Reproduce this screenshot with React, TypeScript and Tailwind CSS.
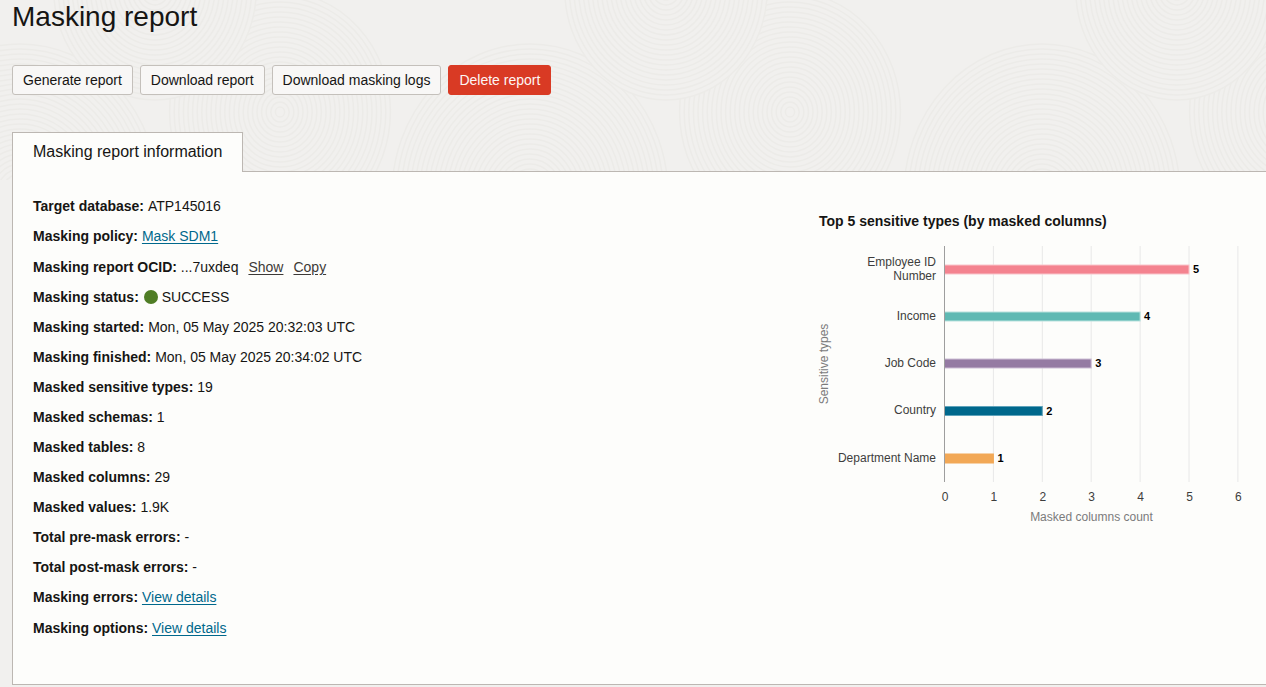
const font = { fontFamily: '"Liberation Sans", Arial, sans-serif' };

const swirls: [number, number, number][] = [
  [20, 194, 150],
  [530, 194, 150],
  [1042, 194, 150],
  [280, 112, 120],
  [790, 112, 120],
  [1300, 112, 120],
  [155, -10, 110],
  [666, -10, 110],
  [1177, -10, 110],
];

function Texture() {
  return (
    <svg className="absolute left-0 top-0 h-[180px] w-[1266px]" viewBox="0 0 1266 180" fill="none">
      {swirls.map(([cx, cy, r], i) => (
        <g key={i}>
          {Array.from({ length: Math.floor(r / 5) }, (_, k) => {
            const radius = r - k * 5;
            return (
              <ellipse
                key={k}
                cx={cx}
                cy={cy}
                rx={radius * 0.92}
                ry={radius}
                fill="#f1f0ee"
                stroke="#ecebe8"
                strokeWidth="1.5"
              />
            );
          })}
        </g>
      ))}
    </svg>
  );
}

function Btn({ children, danger }: { children: string; danger?: boolean }) {
  return danger ? (
    <button className="h-[30px] rounded-[3px] border border-[#d93a24] bg-[#d93a24] px-[10px] text-sm text-[#fdf6f4]">{children}</button>
  ) : (
    <button className="h-[30px] rounded-[3px] border border-[#c4c0bb] bg-[#f8f7f6] px-[10px] text-sm text-[#161513]">{children}</button>
  );
}

function Row({ label, tall, children }: { label: string; tall?: boolean; children?: React.ReactNode }) {
  return (
    <div className={`flex items-center whitespace-pre text-sm text-[#161513] ${tall ? 'h-[31px] pb-px' : 'h-[30px]'}`}>
      <b className="font-bold">{label}:</b>
      <span> </span>
      {children}
    </div>
  );
}

function A({ children }: { children: string }) {
  return <a className="text-[#00688c] underline underline-offset-2">{children}</a>;
}

const x0 = 144.5;
const unit = 48.9;
const bars = [
  { v: 5, y: 65, c: '#f4838f', e: '#f9c5cb' },
  { v: 4, y: 112, c: '#5fb9b3', e: '#b9e2de' },
  { v: 3, y: 159, c: '#957ba3', e: '#cdbfd5' },
  { v: 2, y: 206.5, c: '#00688c', e: '#5fa3bb' },
  { v: 1, y: 254, c: '#f2a856', e: '#f2a856' },
];
const cats: [string, number][] = [
  ['Employee ID', 66],
  ['Number', 80],
  ['Income', 120],
  ['Job Code', 167],
  ['Country', 214],
  ['Department Name', 262],
];

function Chart() {
  return (
    <svg width="456" height="340" viewBox="0 0 456 340" className="block" style={font}>
      {[1, 2, 3, 4, 5, 6].map((n) => (
        <line key={n} x1={x0 + n * unit} x2={x0 + n * unit} y1="46" y2="282" stroke="#e8e8e8" strokeWidth="1" />
      ))}
      {bars.map((b) => (
        <g key={b.v}>
          <rect x={x0} y={b.y} width={b.v * unit} height="9" fill={b.c} stroke={b.e} strokeWidth="1" />
          <text x={x0 + b.v * unit + 4} y={b.y + 8} fontSize="11" fontWeight="700" fill="#000">{b.v}</text>
        </g>
      ))}
      <line x1={x0} x2={x0} y1="46" y2="282" stroke="#9e9e9e" strokeWidth="1" />
      {cats.map(([t, y]) => (
        <text key={t} x="136" y={y} textAnchor="end" fontSize="12" fill="#3d3d3d">{t}</text>
      ))}
      {[0, 1, 2, 3, 4, 5, 6].map((n) => (
        <text key={n} x={x0 + n * unit + 0.5} y="301" textAnchor="middle" fontSize="12" fill="#3d3d3d">{n}</text>
      ))}
      <text x="291.5" y="321" textAnchor="middle" fontSize="12" fill="#7b7b7b">Masked columns count</text>
      <text transform="translate(28,164) rotate(-90)" textAnchor="middle" fontSize="12" fill="#7b7b7b">Sensitive types</text>
    </svg>
  );
}

export default function App() {
  return (
    <div className="relative h-[687px] w-[1266px] overflow-hidden bg-[#f1f0ee]" style={font}>
      <Texture />
      <div className="relative">
        <h1 className="h-[33px] pl-3 text-[28px] leading-[33px] font-normal text-[#161513]">Masking report</h1>
        <div className="mt-8 flex gap-[7px] pl-3">
          <Btn>Generate report</Btn>
          <Btn>Download report</Btn>
          <Btn>Download masking logs</Btn>
          <Btn danger>Delete report</Btn>
        </div>
        <div className="relative z-10 ml-3 mt-[37px] flex h-10 w-[231px] items-center border-x border-t border-[#bcb7b2] bg-[#fdfdfb] pb-px pl-5 text-base text-[#161513]">
          Masking report information
        </div>
        <div className="-mt-px ml-3 flex h-[514px] w-[1260px] border border-[#bcb7b2] bg-[#fdfdfb]">
          <div className="w-[786px] pl-5 pt-[19px]">
            <Row label="Target database">ATP145016</Row>
            <Row label="Masking policy" tall><A>Mask SDM1</A></Row>
            <Row label="Masking report OCID">
              <span>...7uxdeq</span>
              <a className="ml-[10px] text-[#3d3a37] underline underline-offset-2">Show</a>
              <a className="ml-[10px] text-[#3d3a37] underline underline-offset-2">Copy</a>
            </Row>
            <Row label="Masking status">
              <span className="ml-px mr-[4px] h-[14px] w-[14px] rounded-full bg-[#4f7d25]" />
              <span>SUCCESS</span>
            </Row>
            <Row label="Masking started">Mon, 05 May 2025 20:32:03 UTC</Row>
            <Row label="Masking finished">Mon, 05 May 2025 20:34:02 UTC</Row>
            <Row label="Masked sensitive types">19</Row>
            <Row label="Masked schemas">1</Row>
            <Row label="Masked tables">8</Row>
            <Row label="Masked columns">29</Row>
            <Row label="Masked values">1.9K</Row>
            <Row label="Total pre-mask errors">-</Row>
            <Row label="Total post-mask errors">-</Row>
            <Row label="Masking errors" tall><A>View details</A></Row>
            <Row label="Masking options"><A>View details</A></Row>
          </div>
          <div className="pt-[39px]">
            <div className="ml-[20px] h-5 text-sm leading-5 font-bold text-[#161513]">Top 5 sensitive types (by masked columns)</div>
            <div className="-mt-[31px] ml-px"><Chart /></div>
          </div>
        </div>
      </div>
    </div>
  );
}
